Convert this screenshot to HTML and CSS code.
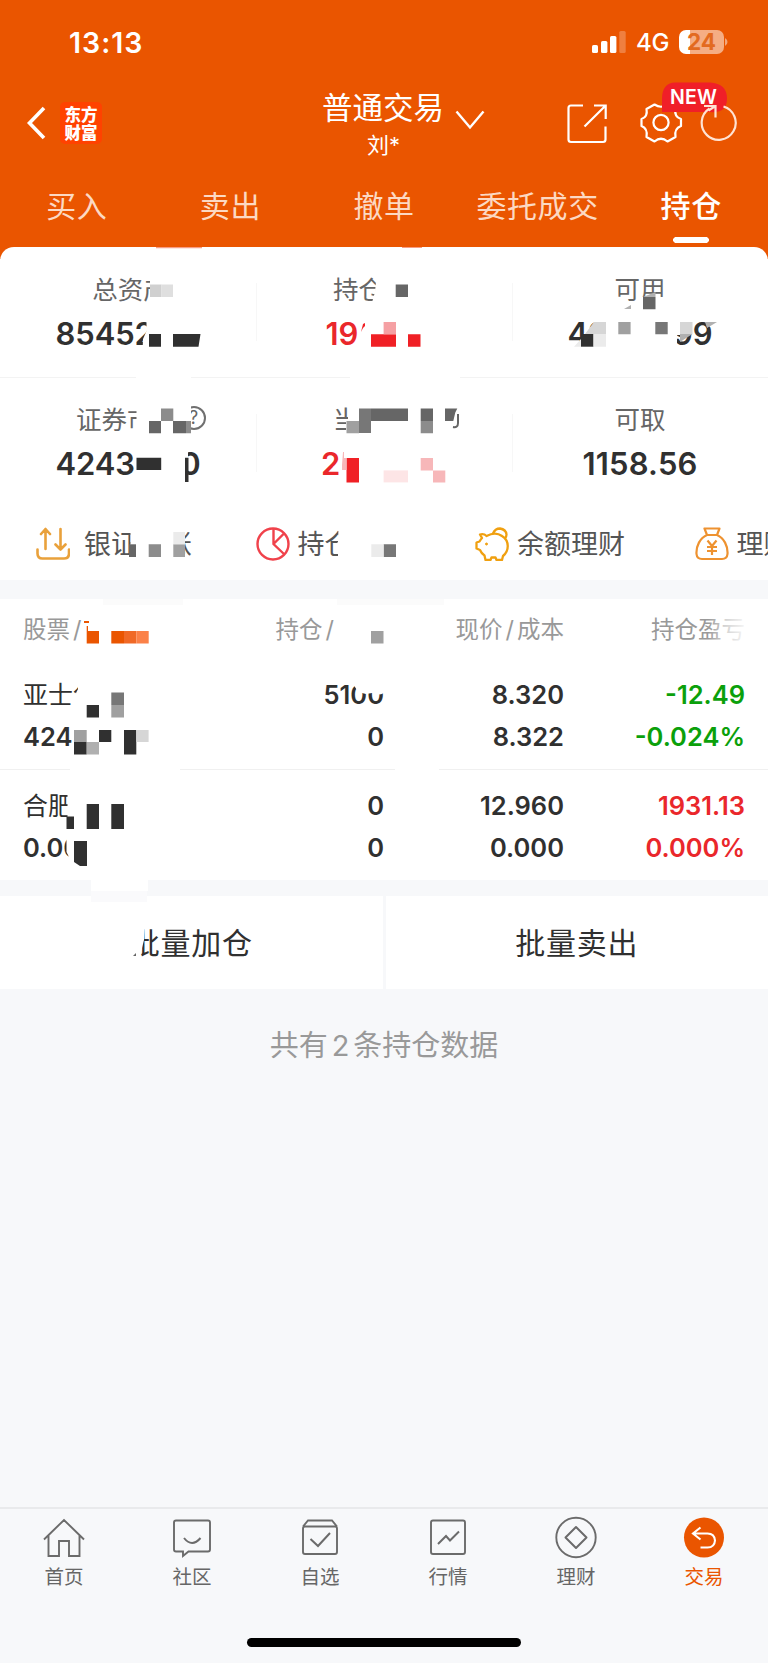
FILE: index.html
```html
<!DOCTYPE html>
<html lang="zh-CN">
<head>
<meta charset="utf-8">
<title>持仓</title>
<link rel="stylesheet" href="styles.css">
</head>
<body>
<div class="screen">
  <header class="header">
    <div class="status">
      <span class="time">13:13</span>
      <span class="status-right">
        <svg class="signal" width="36" height="24" viewBox="0 0 36 24" fill="#fff"><rect x="1" y="15" width="6" height="8" rx="1.6"/><rect x="10" y="11" width="6.4" height="12" rx="1.6"/><rect x="19" y="6" width="6.4" height="17" rx="1.6"/><rect x="28.300" y="1" width="6.400" height="22" rx="1.600" opacity=".25"/></svg>
        <span class="network">4G</span>
        <span class="battery">24</span>
        <svg width="4" height="10" viewBox="0 0 4 10"><path d="M1 1Q3.500 2.500 3.500 5T1 9z" fill="#f2a67c"/></svg>
      </span>
    </div>
    <div class="nav">
      <div class="nav-left">
        <svg width="20" height="34" viewBox="0 0 20 34" fill="none" stroke="#fff" stroke-width="3.6"><path d="M18 2 3.500 17 18 32"/></svg>
        <span class="logo"><span>东方</span><span>财富</span></span>
      </div>
      <div class="nav-title">
        <div class="account">普通交易<svg width="30" height="20" viewBox="0 0 30 20" fill="none" stroke="#fff" stroke-width="2.4"><path d="m1.500 1.500 13.500 16 13.500-16"/></svg></div>
        <div class="user">刘*</div>
      </div>
      <svg class="nav-icons" width="174" height="66" viewBox="564 80 174 66" fill="none" stroke="#fff" stroke-width="2.200">
        <path d="M583 105.500H571q-2.500 0-2.500 2.500V139.500q0 2.500 2.500 2.500h32q2.500 0 2.500-2.500v-13M594 105.500h11.700v13.500M605.700 105.500 584.500 126.500"/>
        <path stroke-linejoin="round" d="M654.500 104.500Q661 109 667.500 104.500L675.500 109Q674 117 681 119V126Q674 128.500 675.500 137L667.500 141.500Q661 136 654.500 141.500L646.500 137Q648 128.500 641.500 126V119Q648 117 646.500 109Z"/>
        <circle cx="661" cy="122.500" r="7.600"/>
        <path d="M675 82.500h35q17 1 17 16t-17 13.500h-48V99q0-16 13-16.500z" fill="#f01f28" stroke="none"/>
        <path d="M709.500 108.500a17 17 0 1 0 14-2" stroke="#ffe3d3"/>
        <path d="M704 106h11.500v11.500M715.500 106l-7 4.500" stroke="#ffe3d3"/>
      </svg>
      <span class="badge">NEW</span>
    </div>
    <nav class="tabs">
      <span>买入</span><span>卖出</span><span>撤单</span><span>委托成交</span><span class="tab-active">持仓</span>
    </nav>
  </header>

  <section class="summary">
    <div class="summary-row">
      <div class="cell"><div class="label label-shift">总资产</div><div class="value masked"><span>85452</span></div></div>
      <div class="cell"><div class="label">持仓<span class="blank">盈亏</span></div><div class="value masked narrow red"><span>19</span></div></div>
      <div class="cell"><div class="label">可用</div><div class="value masked"><span>42</span><span>99</span></div></div>
    </div>
    <div class="summary-row">
      <div class="cell"><div class="label label-help">证券市<span class="help">?</span></div><div class="value masked"><span>4243</span><span>0</span></div></div>
      <div class="cell"><div class="label">当<span class="blank">日盈亏</span></div><div class="value masked mid red"><span>2</span></div></div>
      <div class="cell"><div class="label">可取</div><div class="value">1158.56</div></div>
    </div>
    <div class="actions">
      <div class="action wide-gap"><svg width="34" height="34" viewBox="0 0 34 34" fill="none" stroke="#e9a13b" stroke-width="2.600" stroke-linecap="round" stroke-linejoin="round"><path d="M9.500 22V2M5 7 9.500 2l4.500 5M24.500 2v20M19.500 17.500l5 5 5-5M1.500 22.500v4q0 5 5 5H28q5 0 5-5v-4"/></svg>银证转账</div>
      <div class="action"><svg width="34" height="34" viewBox="0 0 34 34" fill="none" stroke="#f0424b" stroke-width="2.400"><circle cx="17" cy="17" r="15.500"/><path d="M17.500 1.500V17L28.500 27.500M17.500 17 28.500 6"/></svg>持仓</div>
      <div class="action"><svg width="34" height="34" viewBox="0 0 34 34" fill="none" stroke="#f0a010" stroke-width="2.300" stroke-linejoin="round"><path d="M5 7.500Q9 6.500 11.500 9C17 6 23 6 27 9C35 14 34 24 28 29L27 33H21.500L20.500 30.500H16.500L15.500 33H10.500L9.500 28.500Q6.500 26.500 5 23L1.500 21.500V15.500L4.500 14.500Q6 12 7 11Z"/><path d="M18 6.500q2-5 7-5 6 1 6.500 6 0 2-1.500 4"/><circle cx="11.500" cy="17" r="1" fill="#f0a010" stroke-width="1"/></svg>余额理财</div>
      <div class="action"><svg width="34" height="34" viewBox="0 0 34 34" fill="none" stroke="#ee9230" stroke-width="2.200" stroke-linejoin="round"><path d="M9.500 1.500h15L22 8H12zM12 8C5 11 1 19 1.500 27q.500 5 5.500 5h20q5 0 5.500-5C33 19 29 11 22 8"/><path d="m12.500 13.500 4.500 5.500 4.500-5.500M17 19v9M12 20h10M12 24h10"/></svg>理财</div>
    </div>
  </section>

  <section class="holdings">
    <div class="grid head"><span>股票<i>/</i></span><span class="qty-head">持仓<i>/</i></span><span>现价<i>/</i>成本</span><span>持仓盈亏</span></div>
    <div class="grid stock">
      <div><p class="name">亚士创</p><p>424</p></div>
      <div><p>5100</p><p>0</p></div>
      <div><p>8.320</p><p>8.322</p></div>
      <div class="green"><p>-12.49</p><p>-0.024%</p></div>
    </div>
    <div class="grid stock">
      <div><p class="name">合肥</p><p>0.00</p></div>
      <div><p>0</p><p>0</p></div>
      <div><p>12.960</p><p>0.000</p></div>
      <div class="red"><p>1931.13</p><p>0.000%</p></div>
    </div>
  </section>

  <section class="batch"><div>批量加仓</div><div>批量卖出</div></section>
  <p class="count">共有<b>2</b>条持仓数据</p>

  <footer class="tabbar">
    <div class="tabbar-items">
      <div class="item"><svg width="44" height="44" viewBox="0 0 44 44"><path d="M2 23.500 22 4l20 19.500M6.500 19.500V40H17V25h10v15h10.500V19.500"/></svg>首页</div>
      <div class="item"><svg width="44" height="44" viewBox="0 0 44 44"><path d="M6 4.500h32q2 0 2 2v27q0 2-2 2H18.500L13 40v-4.500H6q-2 0-2-2v-27q0-2 2-2z"/><path d="M14 22q8 10 16.500 0" stroke-width="2"/></svg>社区</div>
      <div class="item"><svg width="44" height="44" viewBox="0 0 44 44"><path d="M5 10.500 10 4.500h24l5 6M7 10.500h30q2 0 2 2V36q0 2-2 2H7q-2 0-2-2V12.500q0-2 2-2z"/><path d="m12.500 23 7.500 7 12-13" stroke-width="2"/></svg>自选</div>
      <div class="item"><svg width="44" height="44" viewBox="0 0 44 44"><rect x="5" y="4.500" width="34" height="33.500" rx="2"/><path d="m12 28 8-8 4 4.500 9-9" stroke-width="2"/></svg>行情</div>
      <div class="item"><svg width="44" height="44" viewBox="0 0 44 44"><circle cx="22" cy="21.500" r="19.700"/><path stroke-linejoin="round" d="m22 11 10.500 10.500L22 32 11.500 21.500z" stroke-width="2"/></svg>理财</div>
      <div class="item item-active"><svg width="44" height="44" viewBox="0 0 44 44"><circle cx="22" cy="21.500" r="20" fill="#ea5500" stroke="none"/><path d="M18.500 11.500 11 17.500l7.500 6M11 17.500h14.500q7 0 7.500 7-.500 7-7.500 7H18.500" stroke="#fff" stroke-width="2.100"/></svg>交易</div>
    </div>
    <div class="home-bar"></div>
  </footer>

  <svg class="mosaic" width="768" height="1663" viewBox="0 0 768 1663">
    <!-- white masks -->
    <g fill="#fff">
      <path d="M150 272h40v36h-40zM148 300h5v12h-5zM146.500 318H206v34h-63.500l.500-13 3.500-8z"/>
      <path d="M376.700 274H450v32h-79l4-14zM360 318h90v34h-90z"/>
      <path d="M640 297h30v14h-30zM599 318h78v34h-96V337zM677 318h24l-20 17h-4zM703 318h14v9h-7z"/>
      <path d="M136.500 400H191v36h-54.500zM136.500 448H188v36h-51.500z"/>
      <path d="M348 400h114v36H348zM346 420h6v14h-6z"/>
      <path d="M130.500 528H185v34h-46v-6h-8.500zM338.500 528H400v34h-62v-8h-4v-8l4-4z"/>
      <path d="M78 682H100v32H74v-16l4-9zM352 682h32v11q-6 3-12 0l-6 1-8-2z"/>
      <path d="M67.500 790H130v40H67.500zM66.500 834H100v34H70v-9l-3.500-7z"/>
      <path d="M70 767h110v4H70zM395 767h44v4h-44zM136 375h55v4h-55zM350 375h110v4H350z"/>
      <path d="M91 879h57v12H91zM128 924h17l-1 16-6 24h-10z"/>
    </g>
    <path d="M91 891h56v11H91z" fill="#fafafc"/>
    <path d="M103 599h80v6h-80zM337 599h107v6H337z" fill="#fbfbfb"/>
    <path d="M156 247h46v1.200h-46zM402 247h20v1h-20z" fill="#f79c83"/>
    <path d="m133 956 3-3v3z" fill="#666"/>

    <g fill="#303030">
      <path d="M149 334h12v12.700h-12zM173 334h27.500l-2 12.700H173z"/>
      <path d="M136.500 457.700h24.700V470h-24.700zM185 457.700h3.500V482H185z"/>
      <path d="M581 334h12.500v12.700H581z"/>
      <path d="M86.700 705H99v12.500H86.700zM74 742h12.700v12.500H74zM99 730h12.300v12H99zM124 730h12.300v24.500H124z"/>
      <path d="M66.500 816.500H74V829h-7.500zM86.700 804H99v25H86.700zM111.300 804H124v25h-12.700zM74 841h13v25h-7l-6-4z"/>
    </g>
    <g fill="#666">
      <path d="M395.700 284.500H408V297h-12.300zM643 297h12.500v12.300H643z"/>
      <path d="M149 421h12v12.300h-12zM173 421h13v12.300h-13zM371 408.500h37V421h-37zM420.700 408.500H433V421h-12.300zM445 408.500h12.300l-2 4-2 8.500H445z"/>
      <path d="M129 544.300h7V557h-7z"/>
    </g>
    <path d="M453 427q5 1 5-4v-9" fill="none" stroke="#666" stroke-width="2"/>
    <path d="M150 284.500h11.500V297H150z" fill="#d0d0d0"/><path d="M161.500 284.500H173V297h-11.500z" fill="#dfdfdf"/>
    <path d="M161 408.500h12.300V421H161zM186 421h5v12.300h-5zM148.700 544.300H161V557h-12.300zM420.700 421H433v12.300h-12.300z" fill="#8c8c8c"/>
    <path d="M359 408.500h12V433h-12zM111.300 692.600H124V705h-12.700zM383.600 544.300H396V557h-12.400zM655.300 322h12.400v12.300h-12.400z" fill="#777"/>
    <path d="M346.500 421H359v12.300h-12.500zM173.300 544.300H185V557h-11.700zM111.300 705H124v12.500h-12.700zM74 730h12.700v12H74zM618.300 322h12.300v12.300h-12.300zM371 631h12.500v12.500H371z" fill="#a0a0a0"/>
    <path d="M86.700 742H99v12.500H86.700zM643 297l12.500-5v5zM624 309l7-4v4zM705 322h12l-10 6zM680 334h12.500l-12.500 8z" fill="#b0b0b0"/>
    <path d="M136.300 730h12.300v12h-12.300zM680 322h12.500v12H680zM594 322h12v12h-21z" fill="#d6d6d6"/>
    <path d="M593.500 334H606v12.700h-12.500zM581 339v7.700h-7zM173.300 532h11.700v12.300h-11.700zM371.300 544.300h12.300V557h-12.300z" fill="#ebebeb"/>
    <g fill="#f02025"><path d="M371 334.300h25v12.400h-25zM408 334.300h12.500v12.400H408zM346.500 458H359v24.500h-12.500zM361 332l2-8 2-1v3l-2 2z"/></g>
    <path d="M383.600 322H396v12.300h-12.400z" fill="#f5a0a3"/>
    <path d="M342 465l1-13h1v6h2.500v12H342zM420.700 458H433v12.400h-12.300zM433 470.400h12.300v12H433z" fill="#f7b7b9"/>
    <path d="M383.600 470.400H408v12h-24.400z" fill="#fde5e6"/>
    <path d="M84 621h5v2h-5zM86.700 626H88v5h-1.300zM86.700 631H99v12.500H86.700zM111.300 631H124v12.500h-12.700z" fill="#ea5500"/>
    <path d="M124 631h12.300v12.500H124z" fill="#f06926"/><path d="M136.300 631h12.400v12.500h-12.400z" fill="#fb8148"/>
    <defs><linearGradient id="fade"><stop offset="0" stop-color="#fff" stop-opacity="0"/><stop offset=".4" stop-color="#fff" stop-opacity=".55"/><stop offset="1" stop-color="#fff" stop-opacity=".95"/></linearGradient></defs>
    <path d="M708 612h40v34h-40z" fill="url(#fade)"/>
  </svg>
</div>
</body>
</html>
```
FILE: styles.css
```css
* { box-sizing: border-box; margin: 0; padding: 0; }
body {
  font-family: Inter, "Noto Sans CJK SC", sans-serif;
  background: #f7f8fa;
  color: #303030;
}
svg { display: block; flex: none; }
.screen {
  position: relative;
  width: 768px;
  height: 1663px;
  overflow: hidden;
  display: flex;
  flex-direction: column;
}

/* header */
.header { height: 259px; background: #ea5500; color: #fff; flex: none; }
.status {
  height: 84px;
  padding: 0 40px 0 69px;
  display: flex;
  align-items: center;
  justify-content: space-between;
}
.time { font-size: 28.500px; font-weight: 600; line-height: 30px; letter-spacing: 1px; padding-top: 1px; }
.status-right { display: flex; align-items: center; }
.network { margin-left: 9px; width: 43px; font-size: 24px; font-weight: 500; line-height: 26px; letter-spacing: -.3px; padding-top: 1px; }
.battery {
  width: 45px;
  height: 24px;
  border-radius: 7px;
  background: linear-gradient(90deg, #fff 11px, #f5ad84 11px);
  color: #e36a20;
  font-size: 22.500px;
  font-weight: 700;
  line-height: 24px;
  text-align: center;
}
.nav { position: relative; height: 80px; display: flex; justify-content: space-between; }
.nav-left { width: 204px; padding-left: 26px; display: flex; align-items: center; height: 78px; gap: 14px; }
.logo {
  width: 42px;
  height: 42px;
  border-radius: 5px;
  background: #ff4200;
  display: flex;
  flex-direction: column;
  align-items: center;
  justify-content: center;
  font: 900 16.500px/19px "Noto Sans CJK SC", sans-serif;
}
.logo span { width: 33px; height: 18.500px; white-space: nowrap; }
.nav-title { flex: 1; padding-left: 118px; }
.account { display: flex; align-items: center; gap: 11px; font-size: 30.500px; line-height: 36px; padding-top: 6px; }
.account svg { margin: 20px 0 -4px; }
.user { margin-left: 45px; font-size: 22px; line-height: 30px; margin-top: 4px; }
.nav-icons { margin: -4px 30px 0 0; }
.badge { position: absolute; left: 670px; top: 0; font-size: 19.500px; font-weight: 600; line-height: 26px; letter-spacing: .2px; }
.tabs { display: grid; grid-template-columns: repeat(5, 1fr); height: 83px; }
.tabs span {
  text-align: center;
  font-size: 30px;
  letter-spacing: .6px;
  line-height: 84px;
  color: #fcd9c3;
}
.tabs .tab-active {
  color: #fff;
  font-weight: 500;
  background:
    radial-gradient(circle at 3px 3px, #fff 2.600px, transparent 3.200px) 58.800px 73px / 6px 6px no-repeat,
    radial-gradient(circle at 3px 3px, #fff 2.600px, transparent 3.200px) 88.800px 73px / 6px 6px no-repeat,
    linear-gradient(#fff, #fff) 50% 73px / 31px 6px no-repeat;
}

/* asset summary */
.summary { margin-top: -12px; height: 333px; background: #fff; border-radius: 14px 14px 0 0; flex: none; }
.summary-row { display: grid; grid-template-columns: repeat(3, 1fr); height: 129px; }
.summary-row:first-child { height: 131px; border-bottom: 1px solid #f3f3f3; }
.cell {
  padding-top: 25px;
  display: flex;
  flex-direction: column;
  align-items: center;
  gap: 8px;
  background: linear-gradient(#f7f7f7, #f7f7f7) 0 36px / 1px 58px no-repeat;
}
.summary-row + .summary-row .cell { padding-top: 24px; }
.cell:first-child { background: none; }
.label { font-size: 25.500px; line-height: 36px; color: #666; white-space: nowrap; }
.label-shift { padding-left: 5px; }
.label-help { display: flex; align-items: center; width: 104px; }
.help {
  margin-left: 27px;
  flex: none;
  width: 24px;
  height: 24px;
  border: 2px solid #707070;
  border-radius: 50%;
  font-size: 18px;
  line-height: 20px;
  text-align: center;
  position: relative;
  left: 2px;
  top: -2px;
}
.blank { visibility: hidden; }
.value { font-size: 31px; font-weight: 600; line-height: 36px; letter-spacing: .2px; }
.masked { display: flex; justify-content: space-between; width: 145px; letter-spacing: -.1px; }
.narrow { width: 117px; }
.mid { width: 126px; }
.actions { display: grid; grid-template-columns: repeat(4, 219.500px); height: 75px; padding-left: 36px; overflow: hidden; }
.action { display: flex; align-items: center; gap: 8px; font-size: 27px; line-height: 34px; color: #555; white-space: nowrap; }
.action svg { margin-bottom: 2px; }
.wide-gap { gap: 14px; }

/* holdings */
.holdings { margin-top: 19px; height: 281px; background: #fff; flex: none; }
.grid { display: grid; grid-template-columns: 161px 200px 180px 181px; padding-left: 23px; text-align: right; }
.grid > :first-child { text-align: left; }
.head { height: 62px; line-height: 62px; font-size: 23.500px; color: #999; }
.head i { font-style: normal; margin: 0 3px; }
.grid .qty-head { padding-right: 47px; }
.stock { height: 109px; padding-top: 13px; font-size: 25.500px; font-weight: 600; line-height: 42px; }
.stock:nth-child(2) { border-bottom: 1px solid #f0f0f0; }
.stock:nth-child(3) { padding-top: 15px; }
.name { font-weight: 400; font-size: 25px; }
.red { color: #ea272b; }
.green { color: #0ba00b; }

.batch { display: grid; grid-template-columns: 1fr 1fr; column-gap: 3px; margin-top: 16px; flex: none; height: 93px; }
.batch div { background: #fff; text-align: center; font-size: 30px; line-height: 95px; letter-spacing: .7px; height: 93px; }
.count { margin-top: 38px; text-align: center; font-size: 29px; line-height: 37px; color: #999; }
.count b { font-weight: 400; margin: 0 4px; }

/* bottom bar */
.tabbar { margin-top: auto; height: 156px; border-top: 2px solid #e9eaec; flex: none; }
.tabbar-items { display: grid; grid-template-columns: repeat(6, 1fr); height: 129px; padding-top: 7px; }
.item { display: flex; flex-direction: column; align-items: center; font-size: 19.500px; line-height: 30px; color: #666; gap: 2px; }
.item svg { fill: none; stroke: #6b6b6b; stroke-width: 1.900; }
.item-active { color: #ea5500; }
.home-bar { width: 274px; height: 9px; border-radius: 5px; background: #000; margin: 0 auto; }

.mosaic { position: absolute; left: 0; top: 0; pointer-events: none; }
```
